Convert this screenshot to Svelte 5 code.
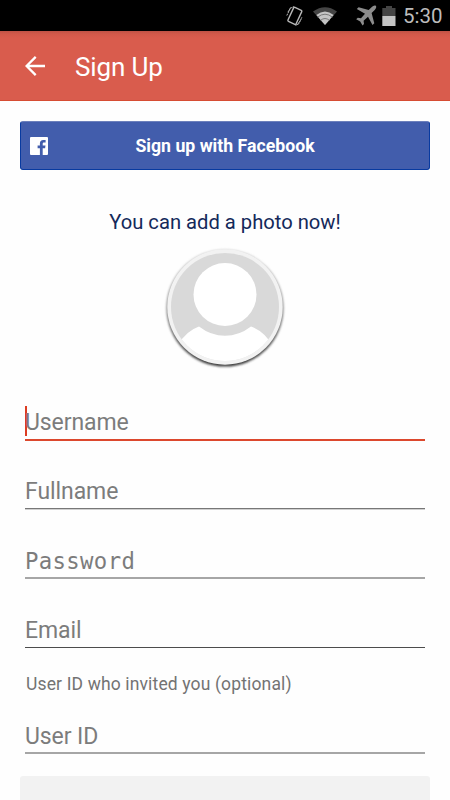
<script lang="ts">
    const fields = [
        { name: 'username', label: 'Username', active: true },
        { name: 'fullname', label: 'Fullname' },
        { name: 'password', label: 'Password' },
        { name: 'email', label: 'Email' },
    ];
</script>

<div class="screen">
    <div class="status_bar">
        <svg class="vibrate" viewBox="0 0 20 22" width="20" height="22">
            <g fill="none" stroke="#b8b8b8">
                <rect x="5.3" y="3.2" width="9" height="15.4" rx="1" stroke-width="1.4" transform="rotate(25 10 11)" />
                <path d="M1.8 10.5L5.4 3.2L9 1.6M3 7L6 2M12 20L15.8 14.8M10.5 20.4L14 18.6L17 12" stroke-width="1" stroke-dasharray="2 .6" />
            </g>
        </svg>
        <svg class="wifi" viewBox="0 0 24 18" width="24" height="18">
            <path d="M0 4.5Q12-4 24 4.5L12 18Z" fill="#454545" />
            <path d="M3.3 8Q12 .8 20.7 8L12 18Z" fill="#c4c4c4" />
            <path d="M4.5 10.2Q12 4.2 19.5 10.2M7.5 13.4Q12 9.6 16.5 13.4" fill="none" stroke="#666" stroke-width=".8" />
        </svg>
        <svg class="plane" viewBox="0 0 21 21" width="21" height="21">
            <path d="M19.8.8C18.6-.2 17 .8 15.8 2L12.7 5.1L2.6 2.3L.8 4.1L9 8.8L5 13.2L1.8 12.8L.2 14.3L4.2 16.5L6.5 20.5L8 19L7.6 15.8L12 11.8L16.5 20L18.3 18.2L15.6 8L18.7 4.9C19.8 3.8 20.8 2 19.8.8Z" fill="#8c8c8c" />
        </svg>
        <svg class="battery" viewBox="0 0 14 20" width="14" height="20">
            <path d="M4 0H10V2H13.5V10H.3V2H4Z" fill="#454545" />
            <path d="M.3 10H13.5V20H.3Z" fill="#c4c4c4" />
        </svg>
        <span class="clock">5:30</span>
    </div>

    <header class="toolbar">
        <svg class="back" viewBox="0 0 20 20" width="20" height="20">
            <path d="M20 10H2M10.7 .9L1.6 10L10.7 19.1" fill="none" stroke="#fff" stroke-width="2.3" />
        </svg>
        <h1>Sign Up</h1>
    </header>

    <main>
        <button class="facebook">
            <svg viewBox="0 0 18 18" width="18" height="18">
                <path d="M1 0H17Q18 0 18 1V17Q18 18 17 18H12.7V11.3H15.1L15.5 8.5H12.7V6.8C12.7 5.8 13.2 5.4 14.1 5.4H15.6V2.9H13.3C11 2.9 9.9 4.3 9.9 6.4V8.5H7.6V11.3H9.9V18H1Q0 18 0 17V1Q0 0 1 0Z" fill="#fff" />
            </svg>
            <span>Sign up with Facebook</span>
        </button>

        <p class="photo_hint">You can add a photo now!</p>

        <svg class="avatar" viewBox="0 0 122 122" width="122" height="122">
            <defs>
                <clipPath id="face"><circle cx="61" cy="60" r="54" /></clipPath>
                <linearGradient id="rim" x1="0" y1="0" x2="0" y2="1">
                    <stop offset="0" stop-color="#ccc" />
                    <stop offset=".5" stop-color="#8c8c8c" />
                    <stop offset="1" stop-color="#3c3c3c" />
                </linearGradient>
                <filter id="soft" x="-10%" y="-10%" width="120%" height="120%">
                    <feGaussianBlur stdDeviation=".9" />
                </filter>
            </defs>
            <circle cx="61" cy="61" r="58.6" fill="url(#rim)" filter="url(#soft)" />
            <circle cx="61" cy="60" r="57.7" fill="#f2f2f2" />
            <g clip-path="url(#face)">
                <rect width="122" height="122" fill="#d9d9d9" />
                <path d="M14 98Q22 84 35 79.5Q47 88.8 61 88.8Q75 88.8 87 79.5Q100 84 108 98V122H14Z" fill="#fff" />
                <circle cx="61" cy="47.5" r="31.5" fill="#fff" />
            </g>
        </svg>

        <div class="fields">
            {#each fields as field}
                <div class="field {field.name}" class:active={field.active}>
                    {#if field.active}<i class="caret"></i>{/if}
                    <span>{field.label}</span>
                </div>
            {/each}
        </div>

        <p class="invite_hint">User ID who invited you (optional)</p>

        <div class="field user_id">
            <span>User ID</span>
        </div>

        <div class="submit"></div>
    </main>
</div>

<style>
    :global(body) {
        background: #fefefe;
    }

    .screen {
        width: 450px;
        height: 800px;
        overflow: hidden;
        background: #fefefe;
        font-family: Roboto, "Noto Sans", sans-serif;
    }

    .status_bar {
        display: flex;
        align-items: center;
        justify-content: flex-end;
        box-sizing: border-box;
        height: 31px;
        padding-right: 8px;
        background: #000;
    }

    .wifi {
        margin-left: 8px;
    }

    .plane {
        margin-left: 19px;
    }

    .battery {
        margin-left: 5px;
    }

    .clock {
        width: 39px;
        margin-left: 7px;
        color: #bdbdbd;
        font-size: 20.5px;
        line-height: 32px;
        white-space: nowrap;
    }

    .toolbar {
        display: flex;
        align-items: center;
        box-sizing: border-box;
        height: 70px;
        padding-left: 25px;
        border-bottom: 1px solid #d64c33;
        background: linear-gradient(#bf5245, #d2594a 3px, #d95c4d 7px);
    }

    h1 {
        margin: 3px 0 0 30px;
        color: #fff;
        font-size: 26px;
        font-weight: 400;
        letter-spacing: -.15px;
        line-height: 30px;
    }

    main {
        display: flex;
        flex-direction: column;
        padding: 20px 20px 0;
    }

    .facebook {
        display: flex;
        align-items: center;
        flex: none;
        height: 49px;
        padding: 1px 27px 0 9px;
        border: 1px solid #083aa0;
        border-top-color: #6c80bc;
        border-radius: 3px;
        background: #425dac;
        color: #fff;
        font: bold 17.7px Roboto, sans-serif;
    }

    .facebook span {
        flex: 1;
        text-align: center;
    }

    .photo_hint {
        margin: 39px 0 0;
        color: #14295a;
        font-size: 20.2px;
        line-height: 26px;
        text-align: center;
    }

    .avatar {
        flex: none;
        align-self: center;
        margin-top: 12px;
    }

    .fields {
        padding-top: 35px;
    }

    .field {
        display: flex;
        align-items: center;
        box-sizing: border-box;
        height: 37px;
        margin: 0 5px 32px;
        padding-top: 2px;
        border-bottom: 2px solid #a6a6a6;
        color: #7c7c7c;
        font-size: 23px;
        letter-spacing: -.08px;
        line-height: 30px;
    }

    .fullname {
        height: 36px;
        margin-bottom: 33px;
        border-bottom: 1px solid #777;
        box-shadow: 0 1px #d0d0d0;
    }

    .active {
        border-bottom-color: #dc482d;
    }

    .caret {
        width: 2px;
        height: 30px;
        margin: -3px -2px 0 0;
        background: #dc3c22;
    }

    .password {
        font-family: "DejaVu Sans Mono", monospace;
        font-size: 22.3px;
        letter-spacing: .35px;
    }

    .email {
        padding-top: 3px;
        border-bottom: 1px solid #4c4c4c;
    }

    .invite_hint {
        margin: -8px 6px 0;
        color: #737373;
        font-size: 17.5px;
        letter-spacing: .14px;
        line-height: 24px;
    }

    .user_id {
        margin: 21px 5px 22px;
        padding-top: 4px;
    }

    .submit {
        height: 40px;
        border-radius: 3px;
        background: #f2f2f2;
    }
</style>
